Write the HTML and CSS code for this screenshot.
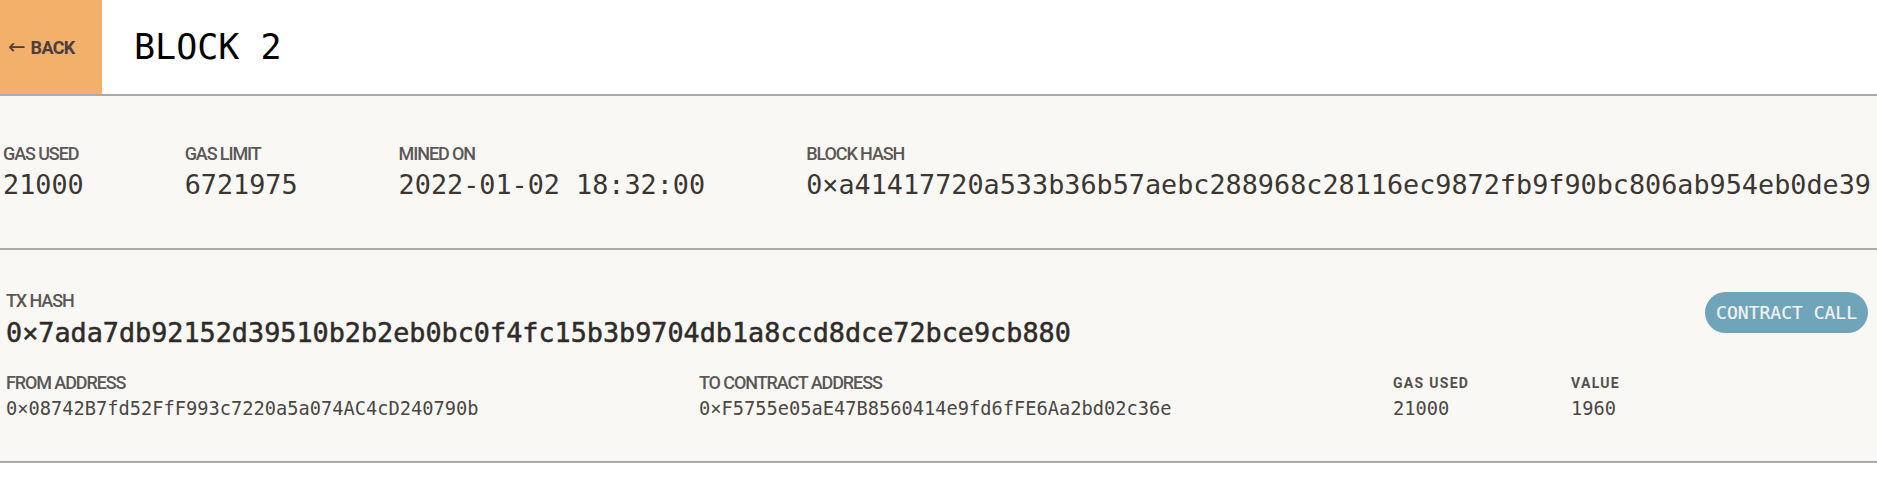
FILE: index.html
```html
<!DOCTYPE html>
<html lang="en">
<head>
<meta charset="utf-8">
<title>Block 2</title>
<link rel="stylesheet" href="styles.css">
</head>
<body>
<header class="topbar">
  <a class="back" href="#"><span class="arrow">←</span><span>BACK</span></a>
  <h1 class="title">BLOCK 2</h1>
</header>
<section class="block-info">
  <div class="field">
    <div class="label">GAS USED</div>
    <div class="value">21000</div>
  </div>
  <div class="field">
    <div class="label">GAS LIMIT</div>
    <div class="value">6721975</div>
  </div>
  <div class="field">
    <div class="label">MINED ON</div>
    <div class="value">2022-01-02 18:32:00</div>
  </div>
  <div class="field">
    <div class="label">BLOCK HASH</div>
    <div class="value">0×a41417720a533b36b57aebc288968c28116ec9872fb9f90bc806ab954eb0de39</div>
  </div>
</section>
<section class="tx">
  <div class="tx-top">
    <div class="tx-id">
      <div class="label">TX HASH</div>
      <div class="tx-hash">0×7ada7db92152d39510b2b2eb0bc0f4fc15b3b9704db1a8ccd8dce72bce9cb880</div>
    </div>
    <span class="pill">CONTRACT CALL</span>
  </div>
  <div class="tx-details">
    <div class="detail">
      <div class="label">FROM ADDRESS</div>
      <div class="small-value">0×08742B7fd52FfF993c7220a5a074AC4cD240790b</div>
    </div>
    <div class="detail">
      <div class="label">TO CONTRACT ADDRESS</div>
      <div class="small-value">0×F5755e05aE47B8560414e9fd6fFE6Aa2bd02c36e</div>
    </div>
    <div class="detail">
      <div class="label label-spaced">GAS USED</div>
      <div class="small-value">21000</div>
    </div>
    <div class="detail">
      <div class="label label-spaced">VALUE</div>
      <div class="small-value">1960</div>
    </div>
  </div>
</section>
</body>
</html>
```
FILE: styles.css
```css
* { box-sizing: border-box; }
html, body { margin: 0; padding: 0; background: #ffffff; }
body { font-family: "DejaVu Sans Mono", monospace; color: #33302e; overflow: hidden; }

.topbar {
  display: flex;
  align-items: center;
  height: 96px;
  border-bottom: 2px solid #aaaaaa;
  background: #ffffff;
}
.back {
  display: flex;
  align-items: center;
  align-self: stretch;
  width: 102px;
  padding-left: 8px;
  background: #f2b06b;
  color: #4a3e40;
  text-decoration: none;
  font-family: Roboto, "Liberation Sans", sans-serif;
  font-weight: 700;
  font-size: 18px;
  letter-spacing: -0.7px;
}
.arrow {
  font-family: "DejaVu Sans", sans-serif;
  font-weight: 400;
  font-size: 21px;
  line-height: 1;
  margin-right: 5px;
  letter-spacing: 0;
}
.title {
  margin: 0 0 0 32px;
  font-family: "DejaVu Sans Mono", monospace;
  font-weight: 400;
  font-size: 35px;
  color: #000000;
  letter-spacing: 0;
}

.label {
  font-family: Roboto, "Liberation Sans", sans-serif;
  font-weight: 500;
  font-size: 18px;
  line-height: 20px;
  color: #5b5755;
  letter-spacing: -1.1px;
  white-space: nowrap;
}
.label-spaced {
  font-weight: 700;
  font-size: 14px;
  letter-spacing: 1.3px;
  color: #54504e;
}

.block-info {
  display: flex;
  gap: 101px;
  padding: 48px 0 47px 3px;
  background: #f9f8f5;
  border-bottom: 2px solid #aaaaaa;
  white-space: nowrap;
}
.value {
  margin-top: 5px;
  font-size: 26.8px;
  line-height: 32px;
  color: #3a3634;
}

.tx {
  padding: 41px 9px 40px 6px;
  background: #f9f8f5;
  border-bottom: 2px solid #aaaaaa;
}
.tx-top {
  display: flex;
  justify-content: space-between;
  align-items: flex-start;
}
.tx-hash {
  margin-top: 6px;
  font-size: 26.8px;
  line-height: 32px;
  font-weight: 400;
  color: #2e2b29;
  -webkit-text-stroke: 0.5px #2e2b29;
}
.pill {
  display: inline-flex;
  align-items: center;
  height: 41px;
  margin-top: 1px;
  padding: 0 11px;
  border-radius: 21px;
  background: #6fa4b9;
  color: #f4f4f2;
  font-size: 18px;
  letter-spacing: 0;
  -webkit-text-stroke: 0.2px #f4f4f2;
}
.tx-details {
  display: grid;
  grid-template-columns: 693px 694px 178px 1fr;
  margin-top: 24px;
}
.small-value {
  margin-top: 4px;
  font-size: 18.7px;
  line-height: 24px;
  color: #4a4644;
  white-space: nowrap;
}
```
